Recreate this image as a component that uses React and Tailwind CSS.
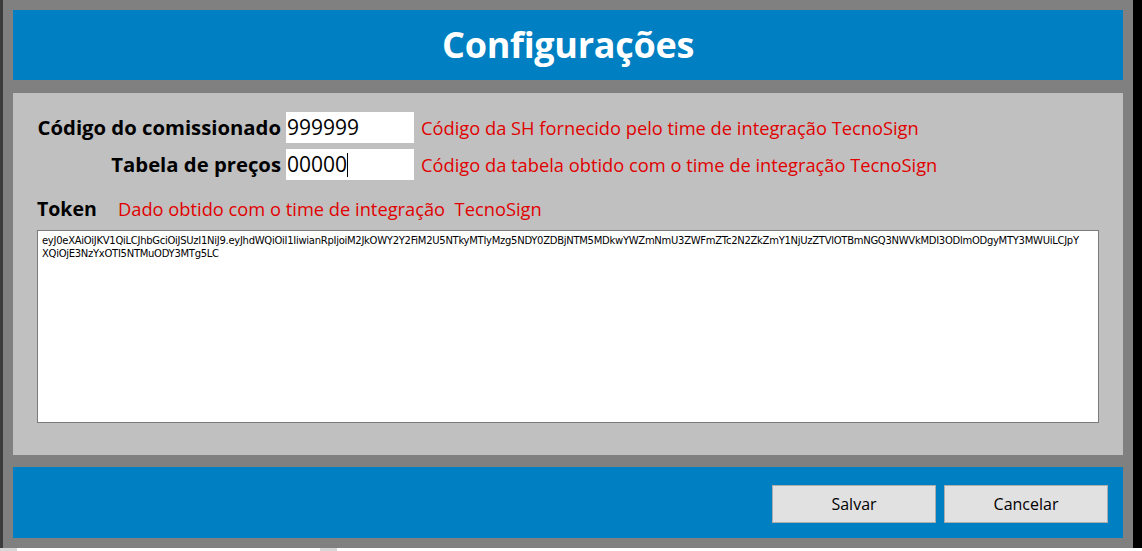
import React from 'react';

// Settings dialog: blue title bar, form panel with commission code, price table and token, footer buttons
const TOKEN_LINES = [
    'eyJ0eXAiOiJKV1QiLCJhbGciOiJSUzI1NiJ9.eyJhdWQiOiI1IiwianRpIjoiM2JkOWY2Y2FiM2U5NTkyMTIyMzg5NDY0ZDBjNTM5MDkwYWZmNmU3ZWFmZTc2N2ZkZmY1NjUzZTVlOTBmNGQ3NWVkMDI3ODlmODgyMTY3MWUiLCJpY',
    'XQiOjE3NzYxOTI5NTMuODY3MTg5LC',
];

const FieldRow = ({ label, value, hint, caret }) => (
    <div className="flex items-center h-[31px]">
        <span className="w-[249px] text-right pr-[5px] font-bold text-[20.3px] text-black">{label}</span>
        <div className="w-[128px] h-[31px] bg-white flex items-center pl-[1px] text-[21px] text-black">
            {value}
            {caret && <span className="inline-block w-[1px] h-[24px] bg-black" />}
        </div>
        <span className="ml-[7px] text-[18.3px] text-[#e00000]">{hint}</span>
    </div>
);

const App = () => {
    return (
        <div className="w-[1142px] h-[551px] bg-black flex flex-col overflow-hidden" style={{ fontFamily: '"Open Sans", "Noto Sans", sans-serif' }}>
            <div className="flex h-[548px]">
                <div className="w-[3px] bg-[#3c3c3c]" />
                {/* dialog frame */}
                <div className="w-[1130px] bg-[#808080] pt-[10px] pl-[10px] pr-[10px] flex flex-col">
                    <div className="h-[70px] bg-[#0080c2] flex items-center justify-center">
                        <h1 className="text-white font-bold text-[36px] tracking-[-0.3px]">Configurações</h1>
                    </div>
                    <div className="h-[362px] mt-[13px] bg-[#c0c0c0] pl-[24px] pt-[19px] flex flex-col">
                        <div className="flex flex-col gap-[6px]">
                            <FieldRow
                                label="Código do comissionado"
                                value="999999"
                                hint="Código da SH fornecido pelo time de integração TecnoSign"
                            />
                            <FieldRow
                                label="Tabela de preços"
                                value="00000"
                                caret
                                hint="Código da tabela obtido com o time de integração TecnoSign"
                            />
                        </div>
                        <div className="flex items-center mt-[15px] h-[28px]">
                            <span className="w-[81px] font-bold text-[19.5px] text-black">Token</span>
                            <span className="text-[18.3px] text-[#e00000] whitespace-pre">Dado obtido com o time de integração  TecnoSign</span>
                        </div>
                        <div className="mt-[7px] w-[1062px] h-[193px] bg-white border border-[#7a7a7a] px-[4px] pt-[3px] overflow-hidden">
                            {TOKEN_LINES.map((line) => (
                                <div
                                    key={line}
                                    className="whitespace-nowrap text-[10px] leading-[13px] text-black tracking-[-0.28px]"
                                    style={{ fontFamily: '"DejaVu Sans", sans-serif' }}
                                >
                                    {line}
                                </div>
                            ))}
                        </div>
                    </div>
                    {/* footer bar */}
                    <div className="h-[71px] mt-[12px] bg-[#0080c2] flex items-center justify-end pr-[15px] gap-[8px] pt-[3px]">
                        <button className="w-[164px] h-[38px] bg-[#e1e1e1] border border-[#adadad] text-[16px] text-black">
                            Salvar
                        </button>
                        <button className="w-[164px] h-[38px] bg-[#e1e1e1] border border-[#adadad] text-[16px] text-black">
                            Cancelar
                        </button>
                    </div>
                </div>
                <div className="w-[9px] bg-black" />
            </div>
            {/* window behind the dialog */}
            <div className="h-[3px] flex bg-white">
                <div className="w-[17px] bg-[#d8d8d8]" />
                <div className="w-[303px]" />
                <div className="w-[17px] bg-[#d8d8d8]" />
                <div className="flex-1" />
            </div>
        </div>
    );
};

export default App;
